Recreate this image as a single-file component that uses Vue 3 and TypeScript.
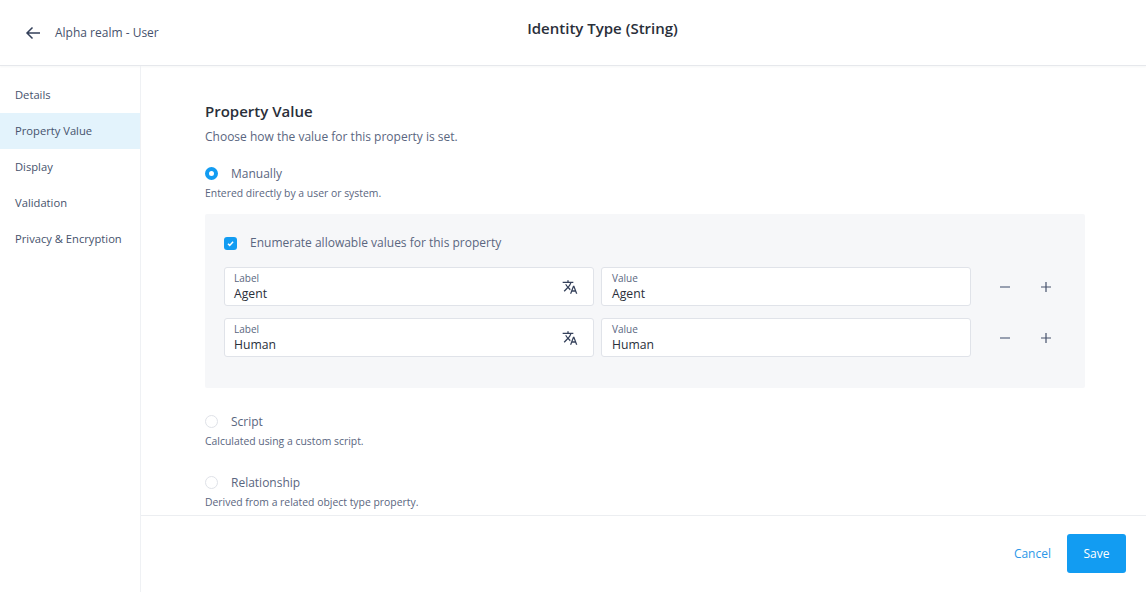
<script setup lang="ts">
const navItems = ['Details', 'Property Value', 'Display', 'Validation', 'Privacy & Encryption']
const rows = ['Agent', 'Human']
</script>

<template>
  <div class="page">
    <header class="topbar">
      <div class="back">
        <svg class="back-icon" width="16" height="16" viewBox="0 0 16 16" fill="none">
          <path d="M15 8H2M7.5 2.5L2 8l5.5 5.5" stroke="#34405a" stroke-width="1.5" />
        </svg>
        <span>Alpha realm - User</span>
      </div>
      <h1>Identity Type (String)</h1>
    </header>
    <div class="body">
      <nav class="sidebar">
        <a
          v-for="item in navItems"
          :key="item"
          :class="{ active: item === 'Property Value' }"
        >
          {{ item }}
        </a>
      </nav>
      <main class="main">
        <div class="content">
          <h2>Property Value</h2>
          <p class="desc">Choose how the value for this property is set.</p>

          <div class="option">
            <span class="radio checked"></span>
            <span class="option-label">Manually</span>
          </div>
          <p class="help">Entered directly by a user or system.</p>

          <div class="panel">
            <div class="check-row">
              <span class="checkbox">
                <svg width="9" height="9" viewBox="0 0 9 9" fill="none">
                  <path d="M2 4.7l1.7 1.7 3.4-3.6" stroke="#fff" stroke-width="1.5" />
                </svg>
              </span>
              <span class="option-label">Enumerate allowable values for this property</span>
            </div>
            <div v-for="row in rows" :key="row" class="value-row">
              <div class="field">
                <div class="field-text">
                  <label>Label</label>
                  <span>{{ row }}</span>
                </div>
                <svg class="translate" width="16" height="16" viewBox="0 0 24 24" fill="#34405a">
                  <path d="M12.87 15.07l-2.54-2.51.03-.03c1.74-1.94 2.98-4.17 3.71-6.53H17V4h-7V2H8v2H1v1.99h11.17C11.5 7.92 10.44 9.75 9 11.35 8.07 10.32 7.3 9.19 6.69 8h-2c.73 1.63 1.73 3.17 2.98 4.56l-5.09 5.02L4 19l5-5 3.11 3.11.76-2.04zM18.5 10h-2L12 22h2l1.12-3h4.75L21 22h2l-4.5-12zm-2.62 7l1.62-4.33L19.12 17h-3.24z" />
                </svg>
              </div>
              <div class="field value-field">
                <div class="field-text">
                  <label>Value</label>
                  <span>{{ row }}</span>
                </div>
              </div>
              <div class="row-actions">
                <svg width="10" height="10" viewBox="0 0 10 10"><path d="M0 5h10" stroke="#5a6680" stroke-width="1.2" /></svg>
                <svg width="10" height="10" viewBox="0 0 10 10"><path d="M0 5h10M5 0v10" stroke="#46526c" stroke-width="1.2" /></svg>
              </div>
            </div>
          </div>

          <div class="option spaced">
            <span class="radio"></span>
            <span class="option-label">Script</span>
          </div>
          <p class="help">Calculated using a custom script.</p>

          <div class="option spaced">
            <span class="radio"></span>
            <span class="option-label">Relationship</span>
          </div>
          <p class="help">Derived from a related object type property.</p>
        </div>
        <footer class="footer">
          <a class="cancel">Cancel</a>
          <button class="save">Save</button>
        </footer>
      </main>
    </div>
  </div>
</template>

<style>
html,
body {
  margin: 0;
  background: #fff;
}
</style>

<style scoped>
.page {
  width: 1146px;
  height: 592px;
  display: flex;
  flex-direction: column;
  overflow: hidden;
  font-family: 'Open Sans', sans-serif;
  color: #5a6680;
}

.topbar {
  height: 66px;
  flex: none;
  box-sizing: border-box;
  display: flex;
  align-items: flex-start;
  padding: 24px 0 0 25px;
  border-bottom: 1px solid #e6e8ec;
  box-shadow: 0 1px 2px rgba(30, 40, 60, 0.04);
}

.back {
  display: flex;
  align-items: center;
  gap: 14px;
  width: 134px;
  flex: none;
  font-size: 12px;
  line-height: 17px;
  color: #46526c;
}

.back-icon {
  flex: none;
}

h1 {
  margin: -7px 0 0;
  flex: 1;
  padding-right: 100px;
  text-align: center;
  font-size: 15px;
  font-weight: 600;
  line-height: 22px;
  color: #2a2f3a;
}

.body {
  flex: 1;
  display: flex;
  min-height: 0;
}

.sidebar {
  width: 141px;
  flex: none;
  box-sizing: border-box;
  padding-top: 11px;
  border-right: 1px solid #eff1f4;
}

.sidebar a {
  display: block;
  height: 36px;
  padding-left: 15px;
  font-size: 11.2px;
  line-height: 36px;
  color: #46526c;
}

.sidebar a.active {
  background: #e3f3fc;
}

.main {
  flex: 1;
  display: flex;
  flex-direction: column;
  min-width: 0;
}

.content {
  height: 449px;
  flex: none;
  box-sizing: border-box;
  padding: 34px 61px 0 64px;
  overflow: hidden;
}

h2 {
  margin: 0;
  font-size: 15px;
  font-weight: 600;
  line-height: 22px;
  color: #2a2f3a;
}

.desc {
  margin: 6px 0 0;
  font-size: 12px;
  line-height: 18px;
}

.option {
  display: flex;
  align-items: center;
  gap: 13px;
  margin-top: 19px;
  height: 18px;
}

.option.spaced {
  margin-top: 25px;
}

.option-label {
  font-size: 12px;
  line-height: 18px;
}

.radio {
  width: 13px;
  height: 13px;
  margin-top: -1px;
  box-sizing: border-box;
  flex: none;
  border-radius: 50%;
  border: 1px solid #dfe2e8;
  background: #fff;
}

.radio.checked {
  border: 4px solid #129cf2;
}

.help {
  margin: 2px 0 0;
  font-size: 10.4px;
  line-height: 16px;
}

.panel {
  margin-top: 13px;
  height: 174px;
  box-sizing: border-box;
  padding: 20px 19px 0;
  background: #f6f7f9;
  border-radius: 2px;
}

.check-row {
  display: flex;
  align-items: center;
  gap: 13px;
  height: 18px;
  margin-bottom: 15px;
}

.checkbox {
  width: 13px;
  height: 13px;
  flex: none;
  display: flex;
  align-items: center;
  justify-content: center;
  border-radius: 3px;
  background: #129cf2;
}

.value-row {
  display: grid;
  grid-template-columns: 370px 370px 1fr;
  column-gap: 7px;
  margin-bottom: 12px;
}

.field {
  height: 39px;
  box-sizing: border-box;
  display: flex;
  align-items: center;
  justify-content: space-between;
  padding: 0 15px 0 9px;
  background: #fff;
  border: 1px solid #e0e3e9;
  border-radius: 3px;
}

.value-field {
  padding-left: 10px;
}

.field-text {
  display: flex;
  flex-direction: column;
}

.field-text label {
  font-size: 10px;
  line-height: 13px;
}

.field-text span {
  font-size: 12.2px;
  line-height: 17px;
  color: #2a2f3a;
}

.translate {
  flex: none;
}

.row-actions {
  display: flex;
  align-items: center;
  gap: 31px;
  padding: 1px 0 0 22px;
}

.footer {
  height: 77px;
  flex: none;
  box-sizing: border-box;
  display: flex;
  align-items: center;
  justify-content: flex-end;
  gap: 16px;
  padding: 0 20px 2px 0;
  border-top: 1px solid #eceef1;
}

.cancel {
  padding-top: 1px;
  font-size: 12px;
  color: #2b97e8;
}

.save {
  width: 59px;
  height: 39px;
  padding: 1px 0 0;
  border: none;
  border-radius: 3px;
  background: #129cf2;
  color: #fff;
  font-family: inherit;
  font-size: 12px;
  font-weight: 500;
}
</style>
